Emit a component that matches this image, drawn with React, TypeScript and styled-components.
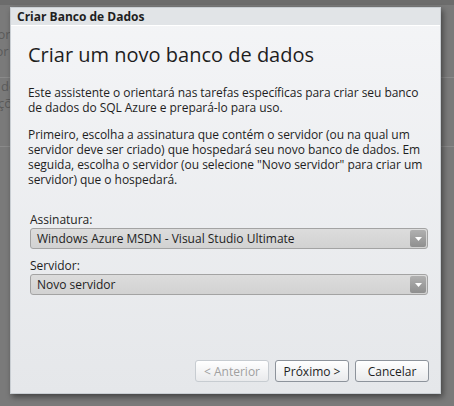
import * as React from 'react';
import styled, { createGlobalStyle } from 'styled-components';

const colors = {
  backdrop: '#7a7a7a',
  backdropText: '#5a5a5a',
  titleBar: '#e1e4e7',
  bodyTop: '#f4f5f7',
  bodyBottom: '#e5e7ea',
  text: '#1e1e1e',
  fieldBorder: '#a3a3a3',
  buttonBorder: '#8d939b',
  disabled: '#a0a0a0',
};

const GlobalStyle = createGlobalStyle`
  html, body {
    margin: 0;
    padding: 0;
    background: ${colors.backdrop};
    font-family: "Open Sans", "Noto Sans", "Liberation Sans", sans-serif;
  }
`;

const App = () => (
  <>
    <GlobalStyle />
    <Screen>
      <Backdrop>
        <BackdropBar />
        <BackdropRow>Servidor</BackdropRow>
        <BackdropRow>Monitor</BackdropRow>
        <BackdropRow>Ger</BackdropRow>
        <BackdropRow $line>Banco de</BackdropRow>
        <BackdropRow>Operações</BackdropRow>
        <BackdropRow>Banco</BackdropRow>
        <BackdropRow>Sede</BackdropRow>
        <BackdropRow $line>Arq</BackdropRow>
      </Backdrop>

      <Dialog>
        <TitleBar>Criar Banco de Dados</TitleBar>
        <Body>
          <Heading>Criar um novo banco de dados</Heading>
          <Paragraph>
            Este assistente o orientará nas tarefas específicas para criar seu banco de dados do SQL
            Azure e prepará-lo para uso.
          </Paragraph>
          <Paragraph>
            Primeiro, escolha a assinatura que contém o servidor (ou na qual um servidor deve ser
            criado) que hospedará seu novo banco de dados. Em seguida, escolha o servidor (ou
            selecione "Novo servidor" para criar um servidor) que o hospedará.
          </Paragraph>

          <Fields>
            <Field>
              <Label>Assinatura:</Label>
              <Select>
                <span>Windows Azure MSDN - Visual Studio Ultimate</span>
                <ArrowButton>
                  <svg width="7" height="4" viewBox="0 0 7 4">
                    <path d="M0 0h7L3.5 4z" fill="#fff" />
                  </svg>
                </ArrowButton>
              </Select>
            </Field>
            <Field>
              <Label>Servidor:</Label>
              <Select>
                <span>Novo servidor</span>
                <ArrowButton>
                  <svg width="7" height="4" viewBox="0 0 7 4">
                    <path d="M0 0h7L3.5 4z" fill="#fff" />
                  </svg>
                </ArrowButton>
              </Select>
            </Field>
          </Fields>
        </Body>
        <Footer>
          <Button disabled>&lt; Anterior</Button>
          <Button>Próximo &gt;</Button>
          <Button>Cancelar</Button>
        </Footer>
      </Dialog>
    </Screen>
  </>
);

const Screen = styled.div`
  position: relative;
  width: 454px;
  height: 406px;
  overflow: hidden;
  background: ${colors.backdrop};
`;

const Backdrop = styled.div`
  display: flex;
  flex-direction: column;
  margin-left: -40px;
`;

const BackdropBar = styled.div`
  height: 5px;
  background: #6c6c6c;
  margin-bottom: 21px;
`;

const BackdropRow = styled.div<{ $line?: boolean }>`
  height: 17px;
  font-size: 13px;
  line-height: 17px;
  color: ${colors.backdropText};
  white-space: nowrap;
  border-top: ${(p) => (p.$line ? '1px solid #8a8a8a' : 'none')};
`;

const Dialog = styled.div`
  position: absolute;
  left: 10px;
  top: 7px;
  width: 431px;
  height: 387px;
  display: flex;
  flex-direction: column;
  background: linear-gradient(${colors.bodyTop}, ${colors.bodyBottom});
  border: 1px solid #c9ced3;
  box-sizing: border-box;
  box-shadow: 2px 3px 6px rgba(0, 0, 0, 0.45);
`;

const TitleBar = styled.div`
  height: 17px;
  flex: none;
  padding-left: 6px;
  background: ${colors.titleBar};
  border-bottom: 1px solid #ffffff;
  font-size: 12px;
  font-weight: bold;
  line-height: 17px;
  color: ${colors.text};
`;

const Body = styled.div`
  flex: 1;
  padding: 16px 12px 0 17px;
  color: ${colors.text};
`;

const Heading = styled.h1`
  margin: 0 0 17px;
  font-size: 20px;
  font-weight: normal;
  line-height: 26px;
`;

const Paragraph = styled.p`
  margin: 0 0 12px;
  font-size: 12px;
  line-height: 15px;
  letter-spacing: -0.05px;
`;

const Fields = styled.div`
  display: flex;
  flex-direction: column;
  gap: 9px;
  margin-top: 25px;
  padding-left: 2px;
  padding-right: 1px;
  width: 398px;
`;

const Field = styled.div`
  display: flex;
  flex-direction: column;
  gap: 1px;
`;

const Label = styled.label`
  font-size: 12px;
  line-height: 15px;
`;

const Select = styled.div`
  display: flex;
  align-items: center;
  justify-content: space-between;
  height: 21px;
  box-sizing: border-box;
  padding: 0 1px 0 6px;
  background: linear-gradient(#dcdcdc, #d2d2d2);
  border: 1px solid ${colors.fieldBorder};
  border-radius: 3px;
  font-size: 12px;
`;

const ArrowButton = styled.div`
  display: flex;
  align-items: center;
  justify-content: center;
  width: 16px;
  height: 17px;
  border-radius: 2px;
  background: linear-gradient(#b0b0b0, #8f8f8f);
`;

const Footer = styled.div`
  display: flex;
  justify-content: flex-end;
  gap: 6px;
  padding: 0 11px 11px 0;
`;

const Button = styled.button`
  width: 74px;
  height: 22px;
  padding: 0;
  background: linear-gradient(#ffffff, #e9eaec);
  border: 1px solid ${colors.buttonBorder};
  border-radius: 3px;
  font-family: inherit;
  font-size: 12px;
  color: ${colors.text};

  &:disabled {
    border-color: #c7ccd1;
    color: ${colors.disabled};
  }
`;

export default App;
